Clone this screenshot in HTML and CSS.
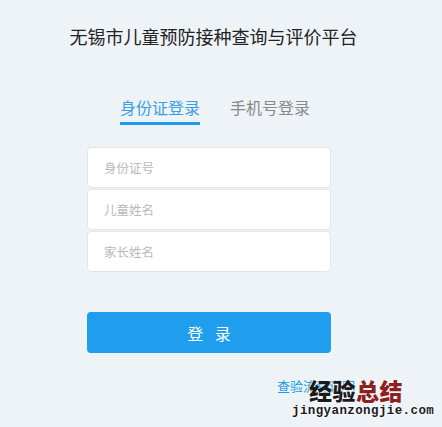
FILE: index.html
```html
<!DOCTYPE html>
<html lang="zh-CN">
<head>
<meta charset="utf-8">
<title>无锡市儿童预防接种查询与评价平台</title>
<link rel="stylesheet" href="styles.css">
</head>
<body>
<div class="page">
  <h1 class="title">无锡市儿童预防接种查询与评价平台</h1>
  <div class="tabs">
    <div class="tab active">身份证登录</div>
    <div class="tab">手机号登录</div>
  </div>
  <form class="form">
    <div class="fields">
      <input class="field" type="text" placeholder="身份证号">
      <input class="field" type="text" placeholder="儿童姓名">
      <input class="field" type="text" placeholder="家长姓名">
    </div>
    <button class="submit" type="button">登 录</button>
    <div class="links"><a class="help" href="#">查验流程说明</a></div>
  </form>
  <div class="watermark">
    <div class="wm-cn"><span class="wm-black">经验</span><span class="wm-red">总结</span></div>
    <div class="wm-en">jingyanzongjie.com</div>
  </div>
</div>
</body>
</html>
```

FILE: styles.css
```css
html, body {
  margin: 0;
  padding: 0;
  background: #eef3f8;
}
body {
  font-family: "Noto Sans CJK SC", "Noto Sans", sans-serif;
  width: 442px;
  height: 427px;
  overflow: hidden;
}
.page {
  position: relative;
  width: 442px;
  height: 427px;
}
.title {
  margin: 0;
  padding: 23px 0 0 0;
  width: 427px;
  text-align: center;
  font-size: 18px;
  line-height: 26px;
  font-weight: normal;
  color: #222;
}
.tabs {
  display: flex;
  gap: 30px;
  margin: 47px 0 0 120px;
}
.tab {
  font-size: 16px;
  line-height: 22px;
  color: #8a8a8a;
  padding-bottom: 4px;
  border-bottom: 3px solid transparent;
}
.tab.active {
  color: #3b9de6;
  border-bottom-color: #1e9aee;
}
.form {
  margin: 22px 0 0 87px;
  width: 244px;
}
.fields {
  display: flex;
  flex-direction: column;
  gap: 1px;
}
.field {
  box-sizing: border-box;
  height: 41px;
  width: 244px;
  margin: 0;
  border: 1px solid #e2e6ea;
  border-radius: 4px;
  background: #fff;
  padding: 0 0 0 16px;
  font-family: "Noto Sans CJK SC", sans-serif;
  font-size: 12.5px;
  outline: none;
}
.field::placeholder {
  color: #b9b9b9;
}
.submit {
  display: block;
  margin-top: 40px;
  width: 244px;
  height: 41px;
  border: none;
  border-radius: 4px;
  background: #1e9eec;
  color: #fff;
  font-family: "Noto Sans CJK SC", sans-serif;
  font-size: 16px;
  letter-spacing: 4px;
  text-indent: 4px;
  cursor: pointer;
}
.links {
  margin-top: 19px;
  padding-left: 190px;
}
.help {
  font-size: 13px;
  line-height: 18px;
  color: #1a9be6;
  text-decoration: none;
  white-space: nowrap;
}
.watermark {
  position: absolute;
  left: 292px;
  top: 377px;
}
.wm-cn {
  font-family: "Noto Sans CJK SC", sans-serif;
  font-weight: 900;
  font-size: 23px;
  line-height: 27px;
  padding-left: 17px;
  letter-spacing: 0.5px;
  white-space: nowrap;
  text-shadow: 0 0 1px #fff, 0 0 2px #fff;
}
.wm-black { color: #1a1a1a; }
.wm-red { color: #8b2020; }
.wm-en {
  font-family: "Liberation Mono", "DejaVu Sans Mono", monospace;
  font-weight: bold;
  font-size: 12.5px;
  letter-spacing: 0.4px;
  line-height: 14px;
  white-space: nowrap;
  color: #1a1a1a;
  text-shadow: 0 0 2px #fff, 0 0 2px #fff, 0 0 1px #fff;
}
```
